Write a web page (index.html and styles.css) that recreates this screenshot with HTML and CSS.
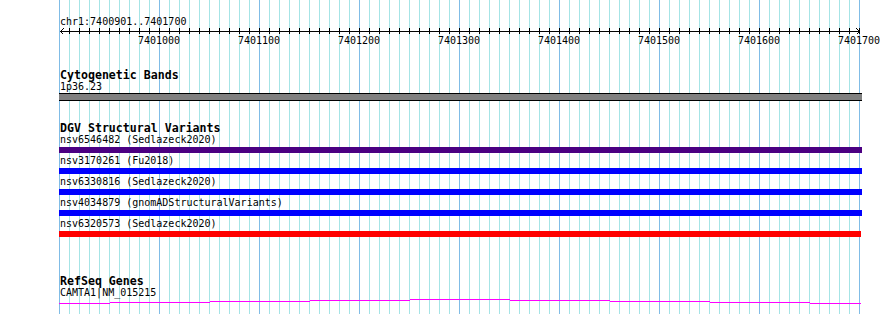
FILE: index.html
```html
<!DOCTYPE html>
<html lang="en">

<head>
    <meta charset="UTF-8">
    <meta name="viewport" content="width=device-width, initial-scale=1.0">
    <title>chr1:7400901..7401700</title>
    <link rel="stylesheet" href="styles.css">
</head>

<body>
    <div class="panel">
        <div class="ruler">
            <div class="ruler-title">chr1:7400901..7401700</div>
            <svg class="scale" width="803" height="19" viewBox="0 0 803 19">
                <defs>
                    <pattern id="ticks" patternUnits="userSpaceOnUse" x="0" y="0" width="10" height="6">
                        <rect x="0" y="0" width="1" height="6" fill="#000"></rect>
                    </pattern>
                </defs>
                <rect x="1" y="3" width="800" height="1" fill="#000"></rect>
                <rect x="10" y="0" width="791" height="6" fill="url(#ticks)"></rect>
                <path d="M4.5 0.5L1.5 3.5L4.5 6.5M797.5 0.5L800.5 3.5L797.5 6.5" stroke="#000" fill="none"></path>
                <text x="100" y="16">7401000</text>
                <text x="200" y="16">7401100</text>
                <text x="300" y="16">7401200</text>
                <text x="400" y="16">7401300</text>
                <text x="500" y="16">7401400</text>
                <text x="600" y="16">7401500</text>
                <text x="700" y="16">7401600</text>
                <text x="800" y="16">7401700</text>
            </svg>
        </div>

        <div class="track cyto">
            <div class="track-title">Cytogenetic Bands</div>
            <div class="feat-label">1p36.23</div>
            <div class="band"></div>
        </div>

        <div class="track dgv">
            <div class="track-title">DGV Structural Variants</div>
            <div class="row">
                <div class="feat-label">nsv6546482 (Sedlazeck2020)</div>
                <div class="bar indigo"></div>
            </div>
            <div class="row">
                <div class="feat-label">nsv3170261 (Fu2018)</div>
                <div class="bar blue"></div>
            </div>
            <div class="row">
                <div class="feat-label">nsv6330816 (Sedlazeck2020)</div>
                <div class="bar blue"></div>
            </div>
            <div class="row">
                <div class="feat-label">nsv4034879 (gnomADStructuralVariants)</div>
                <div class="bar blue"></div>
            </div>
            <div class="row">
                <div class="feat-label">nsv6320573 (Sedlazeck2020)</div>
                <div class="bar red"></div>
            </div>
        </div>

        <div class="track refseq">
            <div class="track-title">RefSeq Genes</div>
            <div class="feat-label">CAMTA1|NM_015215</div>
            <svg class="gene" width="803" height="8" viewBox="0 0 803 8">
                <path d="M0 4.5H51M51 3.5H151M151 2.5H251M251 1.5H351M351 0.5H451M451 1.5H551M551 2.5H651M651 3.5H751M751 4.5H802" stroke="#ff00ff" stroke-width="1" fill="none"></path>
            </svg>
        </div>
    </div>
</body>

</html>
```

FILE: styles.css
```css
body {
    margin: 0;
    background-color: #fff;
}

.panel {
    margin-left: 59px;
    width: 801px;
    height: 314px;
    padding-top: 15px;
    box-sizing: border-box;
    background-image:
        linear-gradient(to right, #80bce6 0, #80bce6 1px, transparent 1px),
        linear-gradient(to right, #a6e4e6 0, #a6e4e6 1px, transparent 1px);
    background-size: 100px 100%, 10px 100%;
    background-repeat: repeat-x;
    font-family: "DejaVu Sans Mono", monospace;
    font-size: 10px;
    line-height: 13px;
    color: #000;
}

.ruler-title,
.feat-label {
    height: 13px;
    padding-left: 1px;
    white-space: pre;
}

.scale {
    display: block;
    overflow: visible;
    shape-rendering: crispEdges;
}

.scale text {
    font-family: "DejaVu Sans Mono", monospace;
    font-size: 10px;
    text-anchor: middle;
    fill: #000;
}

.track-title {
    height: 12px;
    padding-top: 1px;
    padding-left: 1px;
    font-size: 11.6px;
    line-height: 14px;
    font-weight: bold;
    white-space: pre;
}

.cyto {
    margin-top: 20px;
}

.dgv {
    margin-top: 19px;
}

.refseq {
    margin-top: 35px;
}

.band {
    width: 803px;
    height: 6px;
    border-top: 1px solid #000;
    border-bottom: 1px solid #000;
    background-color: #808080;
}

.row {
    height: 21px;
}

.bar {
    width: 803px;
    height: 6px;
    margin-top: 1px;
}

.indigo {
    background-color: #4b0082;
}

.blue {
    background-color: #0000ff;
}

.red {
    width: 802px;
    background-color: #ff0000;
}

.gene {
    display: block;
    overflow: visible;
    shape-rendering: crispEdges;
}
```
